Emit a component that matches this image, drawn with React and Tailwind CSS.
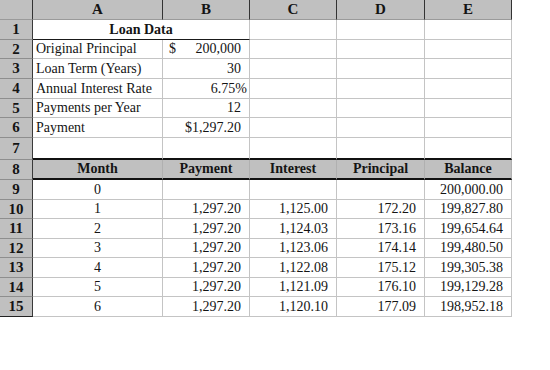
import React from 'react';

// column widths: row header, A, B, C, D, E
const cols = ['w-[33px]', 'w-[130px]', 'w-[87px]', 'w-[87px]', 'w-[88px]', 'w-[87px]'];

const inputs = [
    { label: 'Original Principal', value: '200,000', dollar: true },
    { label: 'Loan Term (Years)', value: '30' },
    { label: 'Annual Interest Rate', value: '6.75%', pct: true },
    { label: 'Payments per Year', value: '12' },
    { label: 'Payment', value: '$1,297.20' },
];

const schedule = [
    ['0', '', '', '', '200,000.00'],
    ['1', '1,297.20', '1,125.00', '172.20', '199,827.80'],
    ['2', '1,297.20', '1,124.03', '173.16', '199,654.64'],
    ['3', '1,297.20', '1,123.06', '174.14', '199,480.50'],
    ['4', '1,297.20', '1,122.08', '175.12', '199,305.38'],
    ['5', '1,297.20', '1,121.09', '176.10', '199,129.28'],
    ['6', '1,297.20', '1,120.10', '177.09', '198,952.18'],
];

const inputHeights = ['h-[19px]', 'h-[20px]', 'h-[20px]', 'h-[19px]', 'h-[20px]'];
const scheduleHeights = ['h-[20px]', 'h-[19px]', 'h-[20px]', 'h-[19px]', 'h-[20px]', 'h-[19px]', 'h-[20px]'];

const RowNum = ({ n, h, last }) => (
    <div className={`${cols[0]} ${h} shrink-0 flex items-center justify-center bg-[#c0c0c0] font-bold text-[15px] border-r border-r-[#3a3a3a] border-b ${last ? 'border-b-[#222]' : 'border-b-[#8e8e8e]'}`}>
        {n}
    </div>
);

const Cell = ({ i, h, className = '', children }) => (
    <div className={`${cols[i]} ${h} shrink-0 flex items-center border-r border-b border-[#c4c4c4] ${className}`}>
        {children}
    </div>
);

export default function App() {
    return (
        <div className="w-[550px] h-[370px] bg-white text-[#141414] text-[14px] leading-none font-['Liberation_Serif',serif]">
            <div className="w-[512px]">
                {/* column letters */}
                <div className="flex h-[20px] bg-[#c0c0c0] font-bold text-[15px]">
                    {['', 'A', 'B', 'C', 'D', 'E'].map((c, i) => (
                        <div key={i} className={`${cols[i]} shrink-0 flex items-center justify-center border-r border-r-[#333] border-b border-b-[#9a9a9a]`}>
                            {c}
                        </div>
                    ))}
                </div>

                {/* row 1 */}
                <div className="flex">
                    <RowNum n="1" h="h-[20px]" />
                    <div className="w-[217px] h-[20px] shrink-0 flex items-center justify-center font-bold border-r border-r-[#c4c4c4] border-b border-b-[#1a1a1a]">
                        Loan Data
                    </div>
                    <Cell i={3} h="h-[20px]" />
                    <Cell i={4} h="h-[20px]" />
                    <Cell i={5} h="h-[20px]" />
                </div>

                {/* rows 2-6 */}
                {inputs.map((r, idx) => {
                    const h = inputHeights[idx];
                    return (
                        <div key={r.label} className="flex">
                            <RowNum n={idx + 2} h={h} />
                            <Cell i={1} h={h} className="pl-[3px]">{r.label}</Cell>
                            <Cell i={2} h={h} className={`justify-between pl-[6px] ${r.pct ? 'pr-[2px]' : 'pr-[8px]'}`}>
                                <span>{r.dollar ? '$' : ''}</span>
                                <span>{r.value}</span>
                            </Cell>
                            <Cell i={3} h={h} />
                            <Cell i={4} h={h} />
                            <Cell i={5} h={h} />
                        </div>
                    );
                })}

                {/* row 7 */}
                <div className="flex">
                    <RowNum n="7" h="h-[22px]" />
                    {[1, 2, 3, 4, 5].map((i) => (
                        <div key={i} className={`${cols[i]} h-[22px] shrink-0 border-r border-r-[#c4c4c4] border-b-2 border-b-[#111]`} />
                    ))}
                </div>

                {/* row 8 headers */}
                <div className="flex">
                    <RowNum n="8" h="h-[20px]" />
                    {['Month', 'Payment', 'Interest', 'Principal', 'Balance'].map((t, k) => (
                        <div key={t} className={`${cols[k + 1]} h-[20px] shrink-0 flex items-center justify-center font-bold bg-[#c0c0c0] border-r border-r-[#b0b0b0] border-b-2 border-b-[#111]`}>
                            {t}
                        </div>
                    ))}
                </div>

                {/* rows 9-15 */}
                {schedule.map((r, idx) => {
                    const h = scheduleHeights[idx];
                    return (
                        <div key={idx} className="flex">
                            <RowNum n={idx + 9} h={h} last={idx === schedule.length - 1} />
                            <Cell i={1} h={h} className="justify-center">{r[0]}</Cell>
                            {[1, 2, 3, 4].map((k) => (
                                <Cell key={k} i={k + 1} h={h} className="justify-end pr-[8px]">{r[k]}</Cell>
                            ))}
                        </div>
                    );
                })}
            </div>
        </div>
    );
}
